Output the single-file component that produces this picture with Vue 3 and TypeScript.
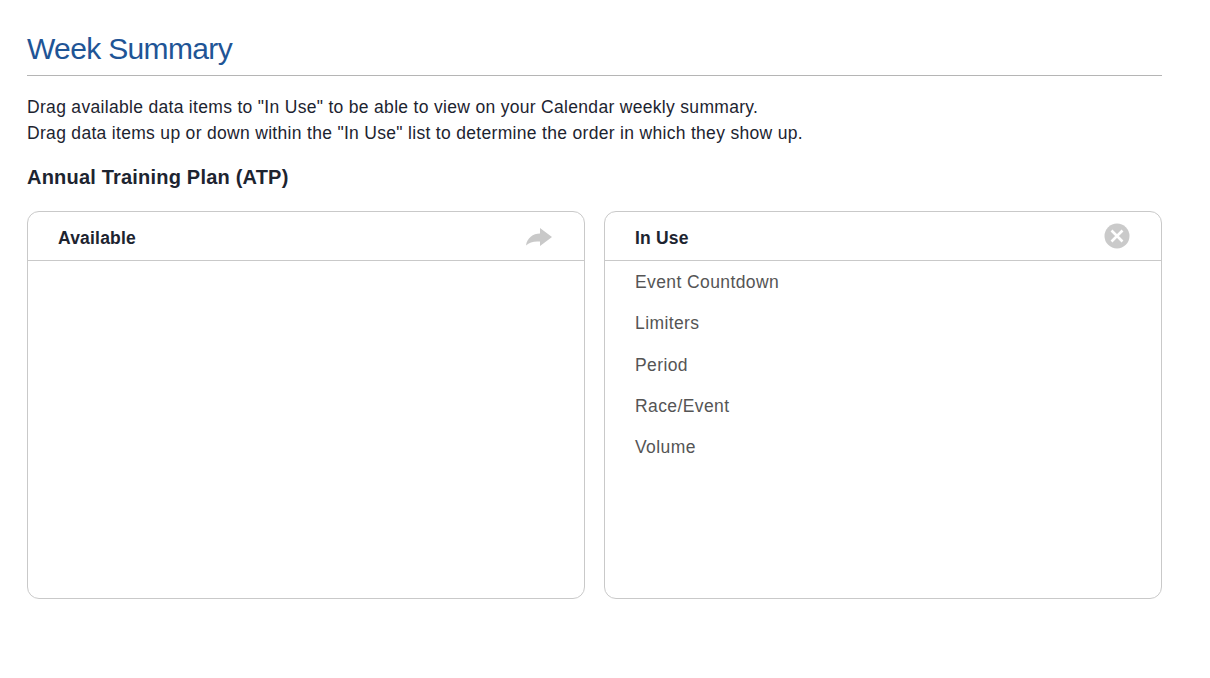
<template>
  <div class="page">
    <h1 class="title">Week Summary</h1>
    <p class="intro">
      Drag available data items to "In Use" to be able to view on your Calendar weekly summary.<br />
      Drag data items up or down within the "In Use" list to determine the order in which they show up.
    </p>
    <h2 class="subtitle">Annual Training Plan (ATP)</h2>
    <div class="columns">
      <section class="panel">
        <header class="panel-header">
          <span class="panel-title">Available</span>
          <svg class="arrow-icon" width="28" height="20" viewBox="0 0 28 20">
            <path d="M1 18.500C2 11 8 6.500 15 6.500V1L27 10 15 19V14.500C9 14 4.500 15 1 18.500Z" fill="#c9c9c9" />
          </svg>
        </header>
      </section>
      <section class="panel">
        <header class="panel-header">
          <span class="panel-title">In Use</span>
          <svg class="clear-icon" width="26" height="26" viewBox="0 0 26 26">
            <circle cx="13" cy="13" r="12.500" fill="#cacaca" />
            <path d="M7.500 7.500L18.500 18.500M18.500 7.500L7.500 18.500" stroke="#fff" stroke-width="2.600" />
          </svg>
        </header>
        <ul class="items">
          <li v-for="item in inUse" :key="item">{{ item }}</li>
        </ul>
      </section>
    </div>
  </div>
</template>

<script setup lang="ts">
const inUse: string[] = ['Event Countdown', 'Limiters', 'Period', 'Race/Event', 'Volume']
</script>

<style>
body {
  background: #fff;
}
</style>

<style scoped>
.page {
  width: 1135px;
  padding: 31px 0 0 27px;
  font-family: "Liberation Sans", Arial, sans-serif;
  color: #1d2430;
}

.title {
  margin: 0;
  padding-bottom: 8px;
  border-bottom: 1px solid #b5b5b5;
  font-size: 30px;
  line-height: 36px;
  font-weight: 400;
  letter-spacing: -0.65px;
  color: #1f5596;
}

.intro {
  margin: 18px 0 0;
  font-size: 17.500px;
  line-height: 26px;
  letter-spacing: 0.31px;
}

.subtitle {
  margin: 18px 0 0;
  font-size: 20px;
  line-height: 26px;
  font-weight: 700;
  letter-spacing: 0.2px;
}

.columns {
  display: grid;
  grid-template-columns: 1fr 1fr;
  gap: 19px;
  margin-top: 21px;
}

.panel {
  height: 388px;
  box-sizing: border-box;
  border: 1px solid #c9c9c9;
  border-radius: 12px;
}

.panel-header {
  display: flex;
  align-items: center;
  justify-content: space-between;
  box-sizing: border-box;
  height: 49px;
  padding: 2px 31px 0 30px;
  border-bottom: 1px solid #c9c9c9;
  font-size: 17.500px;
  font-weight: 700;
  letter-spacing: 0.2px;
}

.panel-title {
  padding-top: 2px;
}

.clear-icon {
  margin-bottom: 2px;
}

.items {
  margin: 0;
  padding: 1px 0 0 30px;
  list-style: none;
}

.items li {
  height: 41.300px;
  line-height: 41.300px;
  font-size: 17.500px;
  letter-spacing: 0.4px;
  color: #555;
}
</style>
